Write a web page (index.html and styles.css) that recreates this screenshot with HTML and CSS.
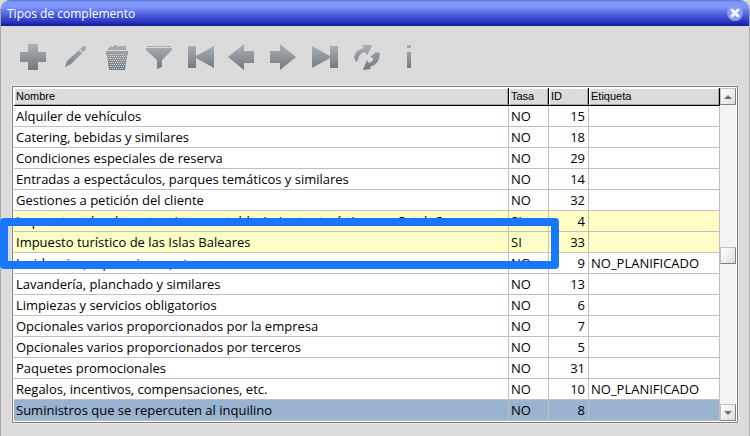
FILE: index.html
```html
<!DOCTYPE html>
<html lang="es">

<head>
    <meta charset="UTF-8">
    <meta name="viewport" content="width=device-width, initial-scale=1.0">
    <title>Tipos de complemento</title>
    <link rel="stylesheet" href="styles.css">
</head>

<body>
    <div class="window">
        <header class="titlebar">
            <h1>Tipos de complemento</h1>
            <button class="close" aria-label="Cerrar">
                <svg width="16" height="16" viewBox="0 0 16 16">
                    <circle cx="8" cy="8" r="8" fill="#8d99ea" />
                    <path d="M5 5l6 6M11 5l-6 6" stroke="#f4f5ff" stroke-width="3" stroke-linecap="round" />
                </svg>
            </button>
        </header>

        <svg class="defs" width="0" height="0" aria-hidden="true">
            <linearGradient id="steel" gradientUnits="userSpaceOnUse" x1="0" y1="0" x2="0" y2="26">
                <stop offset="0" stop-color="#afb2b6" />
                <stop offset="1" stop-color="#707880" />
            </linearGradient>
            <pattern id="holes" width="4" height="4" patternUnits="userSpaceOnUse">
                <path d="M0 0h1v1H0zM2 0h1v1H2zM1 2h1v1H1zM3 2h1v1H3z" fill="#dbdbdb" />
            </pattern>
        </svg>

        <nav class="toolbar">
            <div class="tools">
                <button aria-label="Añadir"><svg viewBox="0 0 26 26"><path d="M8 0h10v8h8v10h-8v8H8v-8H0V8h8z" /></svg></button>
                <button aria-label="Editar"><svg viewBox="0 0 26 26"><path d="M3 23l2-6L17 6l3 3L9 20zM18 5l3-3h2l1 1v2l-3 3z" /></svg></button>
                <button aria-label="Borrar"><svg viewBox="0 0 26 26"><path d="M4 6V4h2V2l3 1 1-2h3v1h9v4zM2 7h22v4h-1l-2 15H5L3 11H2z" /><path class="holes" d="M4 10h18l-2 15H6z" /></svg></button>
                <button aria-label="Filtrar"><svg viewBox="0 0 26 26"><path d="M1 2h24v1H1zM0 4h26v2L16 16v7l-5 2v-9L0 6z" /></svg></button>
                <button aria-label="Primero"><svg viewBox="0 0 26 26"><path d="M0 2h8v10L26 2v22L8 14v10H0z" /></svg></button>
            </div>
            <div class="tools">
                <button aria-label="Anterior"><svg viewBox="0 0 26 26"><path d="M0 13L16 0v7h10v12H16v7z" /></svg></button>
                <button aria-label="Siguiente"><svg viewBox="0 0 26 26"><path d="M26 13L10 0v7H0v12h10v7z" /></svg></button>
                <button aria-label="Último"><svg viewBox="0 0 26 26"><path d="M26 2h-8v10L0 2v22l18-10v10h8z" /></svg></button>
                <button aria-label="Actualizar"><svg viewBox="0 0 26 26"><path d="M0 13Q2 5 10 4L8 1h10l-1 3-4 7-2-3Q5 9 4 16l-2 2zM22 8l4 1q0 11-10 14l1 2-8 1 1-3 3-7 2 3q5-2 4-5l-3-1z" /></svg></button>
                <button aria-label="Información"><svg viewBox="0 0 26 26"><path d="M11 1h4v3h-4zM11 8h4v16h-4z" /></svg></button>
            </div>
        </nav>

        <main class="grid">
            <table>
                <colgroup>
                    <col>
                    <col class="col-tasa">
                    <col class="col-id">
                    <col class="col-etiqueta">
                </colgroup>
                <thead>
                    <tr><th>Nombre</th><th>Tasa</th><th>ID</th><th>Etiqueta</th></tr>
                </thead>
                <tbody>
                    <tr><td>Alquiler de vehículos</td><td>NO</td><td>15</td><td></td></tr>
                    <tr><td>Catering, bebidas y similares</td><td>NO</td><td>18</td><td></td></tr>
                    <tr><td>Condiciones especiales de reserva</td><td>NO</td><td>29</td><td></td></tr>
                    <tr><td>Entradas a espectáculos, parques temáticos y similares</td><td>NO</td><td>14</td><td></td></tr>
                    <tr><td>Gestiones a petición del cliente</td><td>NO</td><td>32</td><td></td></tr>
                    <tr class="tax"><td>Impuesto sobre las estancias en establecimientos turísticos en Cataluña</td><td>SI</td><td>4</td><td></td></tr>
                    <tr class="tax marked"><td>Impuesto turístico de las Islas Baleares</td><td>SI</td><td>33</td><td></td></tr>
                    <tr><td>Incidencias, reparaciones, etc.</td><td>NO</td><td>9</td><td>NO_PLANIFICADO</td></tr>
                    <tr><td>Lavandería, planchado y similares</td><td>NO</td><td>13</td><td></td></tr>
                    <tr><td>Limpiezas y servicios obligatorios</td><td>NO</td><td>6</td><td></td></tr>
                    <tr><td>Opcionales varios proporcionados por la empresa</td><td>NO</td><td>7</td><td></td></tr>
                    <tr><td>Opcionales varios proporcionados por terceros</td><td>NO</td><td>5</td><td></td></tr>
                    <tr><td>Paquetes promocionales</td><td>NO</td><td>31</td><td></td></tr>
                    <tr><td>Regalos, incentivos, compensaciones, etc.</td><td>NO</td><td>10</td><td>NO_PLANIFICADO</td></tr>
                    <tr class="selected"><td>Suministros que se repercuten al inquilino</td><td>NO</td><td>8</td><td></td></tr>
                </tbody>
            </table>
            <div class="scrollbar">
                <button aria-label="Subir"><svg viewBox="0 0 8 4"><path d="M0 4l4-4 4 4z" /></svg></button>
                <div class="track"><div class="thumb"></div></div>
                <button aria-label="Bajar"><svg viewBox="0 0 8 4"><path d="M0 0l4 4 4-4z" /></svg></button>
            </div>
        </main>
    </div>
</body>

</html>
```
FILE: styles.css
```css
* {
    box-sizing: border-box;
    margin: 0;
    padding: 0;
}

body {
    background: #dbdbdb;
    font-family: "Open Sans", Arial, sans-serif;
    font-size: 13px;
    color: #000;
}

button {
    border: none;
    background: none;
}

svg {
    display: block;
}

.window {
    min-height: 100vh;
    padding-bottom: 13px;
    border: solid #a8a8a8;
    border-width: 0 1px 1px;
    border-radius: 10px 10px 0 0;
}

.titlebar {
    display: flex;
    justify-content: space-between;
    align-items: center;
    height: 26px;
    padding: 0 6px;
    border-radius: 9px 9px 0 0;
    background: linear-gradient(#5c74c8 0, #7f97fb 2px, #7f95fa 7px, #5064e0 14px, #2c3cc4 21px, #1820a0 25px, #1018a0 26px);
}

h1 {
    font-size: 12px;
    font-weight: normal;
    color: #fff;
}

.defs {
    position: absolute;
}

.toolbar {
    display: flex;
    gap: 14px;
    padding: 18px 19px 16px;
}

.tools {
    display: flex;
    gap: 16px;
}

.toolbar svg {
    width: 26px;
    height: 26px;
    fill: url(#steel);
}

.toolbar .holes {
    fill: url(#holes);
}

.grid {
    display: flex;
    margin: 0 11px;
    border: 1px solid #808080;
    outline: 1px solid #e8e8e8;
    background: #fff;
    padding: 1px;
}

table {
    flex: 1;
    table-layout: fixed;
    border-collapse: separate;
    border-spacing: 0;
}

.col-tasa,
.col-id {
    width: 40px;
}

.col-etiqueta {
    width: 131px;
}

th {
    height: 18px;
    padding: 0 2px;
    border-right: 1px solid #000;
    border-bottom: 1px solid #000;
    box-shadow: inset 1px 1px #fff, inset -1px -1px #a8a8a8;
    background: #dbdbdb;
    font-family: "Liberation Sans", Arial, sans-serif;
    font-size: 11px;
    font-weight: normal;
    line-height: 17px;
    text-align: left;
}

td {
    height: 21px;
    padding: 0 2px;
    border-right: 1px solid #c0c0c0;
    border-bottom: 1px solid #c0c0c0;
    line-height: 20px;
    white-space: nowrap;
}

td:nth-child(3) {
    padding-right: 3px;
    text-align: right;
}

.tax {
    background: #ffffc6;
}

.selected {
    background: #99b3d1;
}

/* highlight frame around the marked row */
.marked {
    position: relative;
}

.marked::after {
    content: "";
    position: absolute;
    top: -14px;
    bottom: -16px;
    left: -14px;
    right: 161px;
    border: 8px solid #1977ff;
    border-radius: 4px;
}

.scrollbar {
    display: flex;
    flex-direction: column;
    width: 16px;
    background: #f2f2f2;
}

.scrollbar button,
.thumb {
    display: flex;
    justify-content: center;
    align-items: center;
    width: 16px;
    height: 17px;
    border: 1px solid #808080;
    border-top-color: #c0c0c0;
    border-left-color: #c0c0c0;
    background: linear-gradient(135deg, #fff, #dcdcdc);
}

.scrollbar svg {
    width: 8px;
    height: 4px;
    fill: #707070;
}

.track {
    display: grid;
    grid-template-rows: 141fr 17px 140fr;
    flex: 1;
}

.thumb {
    grid-row: 2;
}
```
